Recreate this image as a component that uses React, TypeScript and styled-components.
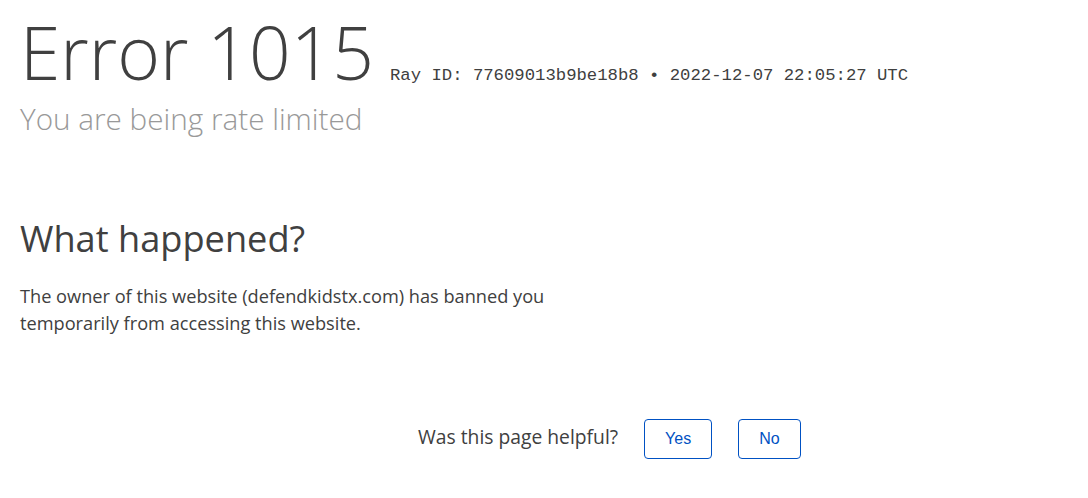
import React from 'react';
import styled, { createGlobalStyle } from 'styled-components';

const GlobalStyle = createGlobalStyle`
  html, body {
    margin: 0;
    padding: 0;
    background: #fff;
  }
  body {
    font-family: 'Open Sans', 'Noto Sans', sans-serif;
    color: #404040;
  }
`;

const Page = styled.div`
  padding: 12px 20px 0 20px;
`;

const Header = styled.header`
  display: flex;
  align-items: baseline;
`;

const Title = styled.h1`
  margin: 0;
  font-size: 73px;
  line-height: 80px;
  font-weight: 300;
  color: #404040;
`;

const RayInfo = styled.div`
  margin-left: 16px;
  font-family: 'Liberation Mono', 'DejaVu Sans Mono', monospace;
  font-size: 17.27px;
  color: #404040;
  white-space: nowrap;
`;

const Subtitle = styled.h2`
  margin: 9px 0 0 0;
  font-size: 29.7px;
  line-height: 36px;
  font-weight: 300;
  color: #999;
`;

const SectionTitle = styled.h2`
  margin: 78px 0 0 0;
  font-size: 36.2px;
  line-height: 46px;
  font-weight: 400;
  color: #404040;
`;

const Paragraph = styled.p`
  margin: 22px 0 0 0;
  max-width: 560px;
  font-size: 18.2px;
  line-height: 27px;
`;

const Feedback = styled.div`
  display: flex;
  align-items: baseline;
  margin-top: 82px;
  padding-left: 398px;
  font-size: 19.3px;
  line-height: 27px;
`;

const Button = styled.button`
  margin-left: 26px;
  height: 40px;
  padding: 0 20px;
  border: 1px solid #0051c3;
  border-radius: 4px;
  background: #fff;
  color: #0051c3;
  font-family: 'Liberation Sans', Arial, sans-serif;
  font-size: 16px;
  cursor: pointer;
`;

export default function App() {
  return (
    <>
      <GlobalStyle />
      <Page>
        <Header>
          <Title>Error 1015</Title>
          <RayInfo>Ray ID: 77609013b9be18b8 • 2022-12-07 22:05:27 UTC</RayInfo>
        </Header>
        <Subtitle>You are being rate limited</Subtitle>
        <SectionTitle>What happened?</SectionTitle>
        <Paragraph>
          The owner of this website (defendkidstx.com) has banned you temporarily from accessing this website.
        </Paragraph>
        <Feedback>
          Was this page helpful?
          <Button>Yes</Button>
          <Button>No</Button>
        </Feedback>
      </Page>
    </>
  );
}
